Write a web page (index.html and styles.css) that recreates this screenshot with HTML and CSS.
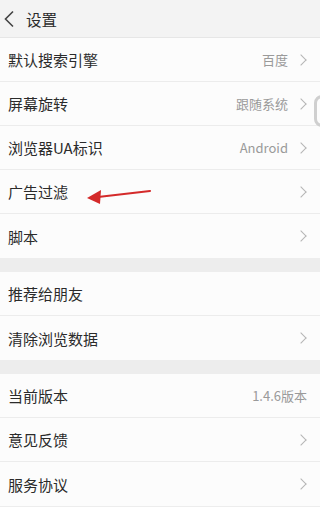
FILE: index.html
```html
<!DOCTYPE html>
<html lang="zh">
<head>
<meta charset="utf-8">
<link rel="stylesheet" href="styles.css">
</head>
<body>
<div class="page">
  <header class="top">
    <svg class="back" width="12" height="18" viewBox="0 0 12 18"><path d="M10 1.5 L2.5 9 L10 16.5" fill="none" stroke="#444" stroke-width="1.6"/></svg>
    <span class="title">设置</span>
  </header>
  <section class="group">
    <div class="row"><span class="label">默认搜索引擎</span><span class="value">百度</span><span class="chev"></span></div>
    <div class="row"><span class="label">屏幕旋转</span><span class="value">跟随系统</span><span class="chev"></span></div>
    <div class="row"><span class="label">浏览器UA标识</span><span class="value">Android</span><span class="chev"></span></div>
    <div class="row ad"><span class="label">广告过滤</span><span class="chev"></span>
      <svg class="pointer" width="70" height="20" viewBox="0 0 70 20"><path d="M64 4 L12 10" stroke="#d42a2a" stroke-width="2.2" fill="none" stroke-linecap="round"/><path d="M1 11 L15 3 L14 17 Z" fill="#d42a2a"/></svg>
    </div>
    <div class="row last"><span class="label">脚本</span><span class="chev"></span></div>
  </section>
  <section class="group">
    <div class="row"><span class="label">推荐给朋友</span></div>
    <div class="row last"><span class="label">清除浏览数据</span><span class="chev"></span></div>
  </section>
  <section class="group">
    <div class="row"><span class="label">当前版本</span><span class="value plain">1.4.6版本</span></div>
    <div class="row"><span class="label">意见反馈</span><span class="chev"></span></div>
    <div class="row last"><span class="label">服务协议</span><span class="chev"></span></div>
  </section>
  <div class="edge"></div>
</div>
</body>
</html>
```
FILE: styles.css
```css
* { box-sizing: border-box; }
html, body { margin: 0; padding: 0; }
body {
  width: 320px;
  height: 507px;
  overflow: hidden;
  background: #ededed;
  font-family: "Noto Sans CJK SC", "Noto Sans", sans-serif;
  color: #2b2b2b;
}
.page { position: relative; }
.top {
  height: 38px;
  background: #f3f3f3;
  display: flex;
  align-items: center;
  padding-left: 3px;
  gap: 11px;
  border-bottom: 1px solid #e6e6e6;
}
.back { display: block; }
.title { font-size: 15.5px; color: #2b2b2b; }
.group {
  background: #fcfcfc;
  margin-bottom: 14px;
}
.row {
  position: relative;
  height: 44px;
  display: flex;
  align-items: center;
  padding: 0 13px 0 8px;
  border-bottom: 1px solid #ececec;
}
.row.last { border-bottom: none; }
.label { font-size: 15px; color: #2b2b2b; flex: 1; }
.value { font-size: 13px; color: #9a9a9a; margin-right: 9px; }
.value.plain { margin-right: 0; }
.chev {
  width: 8px;
  height: 8px;
  border-top: 1px solid #b5b5b5;
  border-right: 1px solid #b5b5b5;
  transform: rotate(45deg);
  margin-right: 2px;
}
.pointer {
  position: absolute;
  left: 86px;
  top: 17px;
}
.edge {
  position: absolute;
  right: -10px;
  top: 95px;
  width: 16px;
  height: 32px;
  border: 3px solid #cfcfcf;
  border-radius: 8px;
}
```
